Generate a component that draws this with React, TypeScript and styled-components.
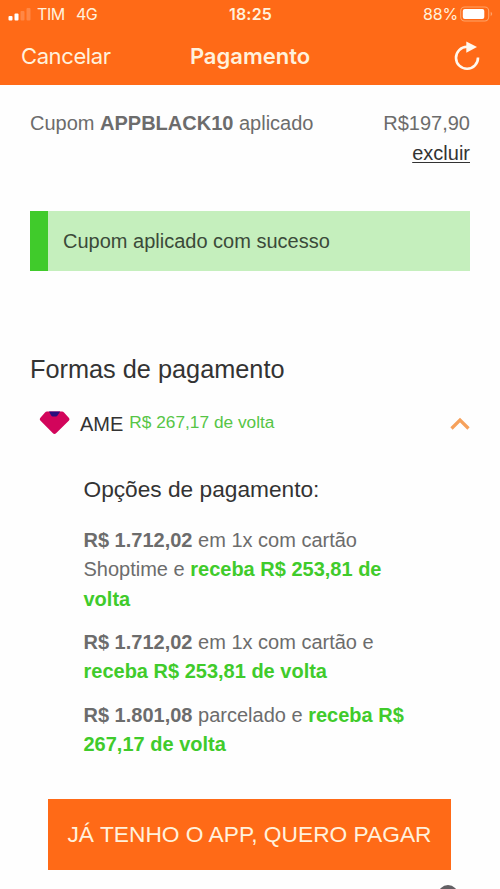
import React from "react";
import styled, { createGlobalStyle } from "styled-components";

const orange = "#ff6a17";
const green = "#40cb2b";

const GlobalStyle = createGlobalStyle`
  * { box-sizing: border-box; }
  body { margin: 0; background: #fff; overflow: hidden; }
`;

const Screen = styled.div`
  width: 500px;
  height: 889px;
  overflow: hidden;
  background: #fefefe;
  font-family: "Liberation Sans", Arial, sans-serif;
  font-size: 20px;
  line-height: 29.3px;
  color: #6c6c6c;
`;

const Header = styled.header`
  height: 85px;
  background: ${orange};
  color: #fff1dc;
  font-family: Inter, "Liberation Sans", sans-serif;
`;

const StatusBar = styled.div`
  display: grid;
  grid-template-columns: 1fr auto 1fr;
  align-items: center;
  height: 28px;
  padding: 0 7px 0 8px;
  font-size: 16px;
  line-height: 20px;
`;

const Carrier = styled.div`
  display: flex;
  align-items: center;
  gap: 6px;
  letter-spacing: -0.4px;
`;

const Network = styled.span`
  margin-left: 5px;
`;

const Clock = styled.div`
  font-weight: 600;
  font-size: 16px;
  letter-spacing: 0.2px;
`;

const Battery = styled.div`
  display: flex;
  align-items: center;
  justify-content: flex-end;
  gap: 2px;
  letter-spacing: -0.2px;
`;

const NavBar = styled.div`
  display: grid;
  grid-template-columns: 1fr auto 1fr;
  align-items: center;
  height: 57px;
  padding: 0 19px 0 21px;
  font-size: 22px;
`;

const NavAction = styled.span`
  letter-spacing: -0.4px;
`;

const NavTitle = styled.div`
  margin-right: 2px;
  font-weight: 600;
`;

const Refresh = styled.div`
  display: flex;
  justify-content: flex-end;
  margin-top: -2px;
`;

const Content = styled.main`
  padding: 24px 30px 0;
`;

const Coupon = styled.section`
  display: flex;
  justify-content: space-between;
  height: 102px;
`;

const CouponValue = styled.div`
  text-align: right;
`;

const RemoveLink = styled.a`
  display: block;
  line-height: 31px;
  color: #333;
  text-decoration: underline;
  text-decoration-thickness: 1px;
  text-underline-offset: 2px;
`;

const Notice = styled.div`
  display: flex;
  align-items: center;
  height: 60px;
  padding: 2px 0 0 15px;
  border-left: 18px solid ${green};
  background: #c5efbd;
  color: #3b4a39;
`;

const SectionTitle = styled.h2`
  margin: 83px 0 0;
  font-size: 25.3px;
  font-weight: 400;
  line-height: 30px;
  color: #333;
`;

const Method = styled.div`
  display: flex;
  align-items: center;
  height: 30px;
  margin-top: 24px;
  padding-left: 9px;
`;

const MethodName = styled.span`
  margin-left: 10px;
  padding-top: 3px;
  color: #333;
`;

const Cashback = styled.span`
  flex: 1;
  margin-left: 6px;
  font-size: 17.3px;
  color: #56c546;
`;

const Options = styled.section`
  margin: 36px 0 0 53.5px;
  width: 330px;
`;

const OptionsTitle = styled.h3`
  margin: 0 0 22px;
  font-size: 22.7px;
  font-weight: 400;
  line-height: 30px;
  color: #333;
`;

const Option = styled.p`
  margin: 0 0 14.2px;
`;

const Reward = styled.strong`
  color: ${green};
`;

const PayButton = styled.button`
  display: block;
  width: 403px;
  height: 71px;
  margin: 40px 0 0 18px;
  padding: 0;
  border: 0;
  background: ${orange};
  color: #fff1dc;
  font: 22.75px "Liberation Sans", Arial, sans-serif;
  white-space: nowrap;
`;

const BottomHint = styled.div`
  display: flex;
  justify-content: flex-end;
  padding: 15px 12px 0 0;
`;

const HintCircle = styled.div`
  width: 20px;
  height: 20px;
  border-radius: 50%;
  background: #626064;
`;

const SignalIcon = () => (
  <svg width="23" height="14" viewBox="0 0 23 14" fill="#fff">
    <rect x="0.5" y="9" width="4" height="4.5" rx="1" />
    <rect x="6.5" y="6.5" width="4" height="7" rx="1" />
    <rect x="12.5" y="4" width="4" height="9.5" rx="1" opacity=".2" />
    <rect x="18.5" y="1" width="4" height="12.5" rx="1" opacity=".2" />
  </svg>
);

const BatteryIcon = () => (
  <svg width="33" height="16" viewBox="0 0 33 16">
    <rect x="0.7" y="1" width="28" height="14" rx="4" fill="none" stroke="#ffa368" strokeWidth="1.1" />
    <rect x="2.8" y="3" width="21.5" height="10" rx="2" fill="#fff" />
    <path d="M30.7 5.8q3 2.2 0 4.4z" fill="#ffa368" />
  </svg>
);

const RefreshIcon = () => (
  <svg width="28" height="30" viewBox="0 0 28 30">
    <path d="M14 5.8A11 11 0 1 0 25 16.5" fill="none" stroke="#fff8ee" strokeWidth="2.6" />
    <path d="M13.3 0.5 24 6 13.3 11.8z" fill="#fff8ee" />
  </svg>
);

const GemIcon = () => (
  <svg width="31" height="24" viewBox="0 0 31 24">
    <path d="M8 .5h15q1.2 0 2 1l5 5.500q1 1.300 0 2.500L17.300 22q-1.800 1.800-3.600 0L1.300 9.500Q.2 8.300 1.200 7L6 1.500q.8-1 2-1z" fill="#d2055b" />
    <path d="M10 .5h11.200L18.500 4.500q-.6 1-1.600 1h-3.100q-1 0-1.600-1z" fill="#28107d" />
  </svg>
);

const ChevronIcon = () => (
  <svg width="20" height="14" viewBox="0 0 20 14">
    <path d="m1.500 12.500 8.500-8.500 8.500 8.500" fill="none" stroke="#f6a15b" strokeWidth="3.200" />
  </svg>
);

const options = [
  { price: "R$ 1.712,02", terms: "em 1x com cartão Shoptime e", reward: "receba R$ 253,81 de volta" },
  { price: "R$ 1.712,02", terms: "em 1x com cartão e", reward: "receba R$ 253,81 de volta" },
  { price: "R$ 1.801,08", terms: "parcelado e", reward: "receba R$ 267,17 de volta" },
];

export default function App() {
  return (
    <>
      <GlobalStyle />
      <Screen>
        <Header>
          <StatusBar>
            <Carrier>
              <SignalIcon />
              <span>TIM</span>
              <Network>4G</Network>
            </Carrier>
            <Clock>18:25</Clock>
            <Battery>
              <span>88%</span>
              <BatteryIcon />
            </Battery>
          </StatusBar>
          <NavBar>
            <NavAction>Cancelar</NavAction>
            <NavTitle>Pagamento</NavTitle>
            <Refresh>
              <RefreshIcon />
            </Refresh>
          </NavBar>
        </Header>
        <Content>
          <Coupon>
            <span>
              Cupom <strong>APPBLACK10</strong> aplicado
            </span>
            <CouponValue>
              R$197,90
              <RemoveLink>excluir</RemoveLink>
            </CouponValue>
          </Coupon>
          <Notice>Cupom aplicado com sucesso</Notice>
          <SectionTitle>Formas de pagamento</SectionTitle>
          <Method>
            <GemIcon />
            <MethodName>AME</MethodName>
            <Cashback>R$ 267,17 de volta</Cashback>
            <ChevronIcon />
          </Method>
          <Options>
            <OptionsTitle>Opções de pagamento:</OptionsTitle>
            {options.map((option) => (
              <Option key={option.price + option.terms}>
                <strong>{option.price}</strong> {option.terms} <Reward>{option.reward}</Reward>
              </Option>
            ))}
          </Options>
          <PayButton>JÁ TENHO O APP, QUERO PAGAR</PayButton>
          <BottomHint>
            <HintCircle />
          </BottomHint>
        </Content>
      </Screen>
    </>
  );
}
